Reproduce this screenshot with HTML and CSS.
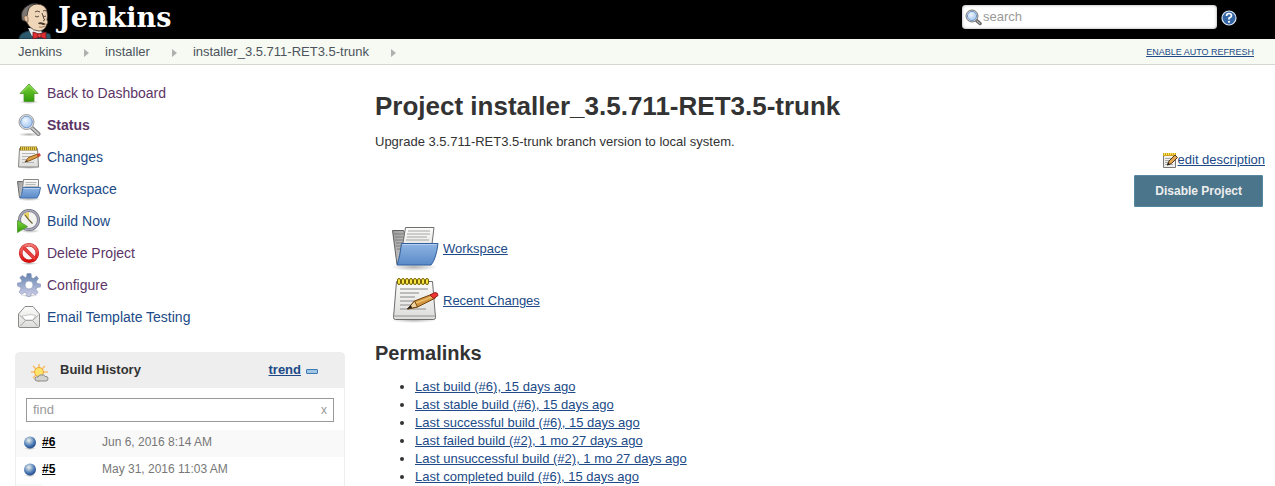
FILE: index.html
```html
<!DOCTYPE html>
<html lang="en">
<head>
<meta charset="utf-8">
<title>installer_3.5.711-RET3.5-trunk [Jenkins]</title>
<link rel="stylesheet" href="styles.css">
</head>
<body>
<svg class="defs" aria-hidden="true">
  <defs>
    <linearGradient id="green" x1="0" y1="0" x2="0" y2="1"><stop offset="0" stop-color="#7ed63c"/><stop offset="1" stop-color="#2f9a08"/></linearGradient>
    <linearGradient id="blue" x1="0" y1="0" x2="0" y2="1"><stop offset="0" stop-color="#8fb5e2"/><stop offset="1" stop-color="#5a8ac8"/></linearGradient>
    <linearGradient id="paper" x1="0" y1="0" x2="0" y2="1"><stop offset="0" stop-color="#fbfbfa"/><stop offset="1" stop-color="#dcdcda"/></linearGradient>
    <linearGradient id="grey" x1="0" y1="0" x2="1" y2="1"><stop offset="0" stop-color="#9c9c9c"/><stop offset="1" stop-color="#d4d4d4"/></linearGradient>
    <linearGradient id="gear" x1="0" y1="0" x2="0" y2="1"><stop offset="0" stop-color="#6482ae"/><stop offset="1" stop-color="#cfcfe8"/></linearGradient>
    <linearGradient id="red" x1="0" y1="0" x2="0" y2="1"><stop offset="0" stop-color="#f27a76"/><stop offset="1" stop-color="#d80c0c"/></linearGradient>
    <radialGradient id="lens" cx=".4" cy=".35" r=".7"><stop offset="0" stop-color="#f0f7ff"/><stop offset="1" stop-color="#9fc3ee"/></radialGradient>
    <radialGradient id="orb" cx=".4" cy=".32" r=".65"><stop offset="0" stop-color="#eef3ee"/><stop offset=".35" stop-color="#9db7d0"/><stop offset=".75" stop-color="#4273b2"/><stop offset="1" stop-color="#2b528e"/></radialGradient>
    <radialGradient id="shade"><stop offset="0" stop-color="#000" stop-opacity=".3"/><stop offset="1" stop-color="#000" stop-opacity="0"/></radialGradient>
    <symbol id="i-folder" viewBox="0 0 48 48">
      <ellipse cx="23" cy="44" rx="23" ry="4" fill="url(#shade)"/>
      <path d="M1.500 7.500h11l1 3h3v31H6z" fill="url(#grey)" stroke="#606060"/>
      <path d="M3 11h10M4 14h9M4 17h9M5 20h8M5 23h7M6 26h5" stroke="#7c7c7c"/>
      <path d="M14.500 4.500H43L41 21H14l-5 11q-2 2 0 2l2-8z" fill="url(#paper)" stroke="#707070"/>
      <path d="M17 8h22M16 11h23M16 14h20M15 17h23" stroke="#a4a4a4"/>
      <path d="M10.500 20.500h36.500q-2 16-7 21.500H6q3-8 4.500-21.500z" fill="url(#blue)" stroke="#315f9d"/>
      <path d="M11.500 21.500h34" stroke="#b6d0ef"/>
    </symbol>
    <symbol id="i-folder-small" viewBox="0 0 24 24">
      <ellipse cx="12" cy="22" rx="12" ry="2" fill="url(#shade)"/>
      <path d="M.5 4.500h5l1 1.500H8v14.500H2.500z" fill="url(#grey)" stroke="#6a6a6a"/>
      <path d="M6.500 2.500h15V10h-14L5 16z" fill="url(#paper)" stroke="#858585"/>
      <path d="M8.500 5.500h11M8.500 7.500h10" stroke="#b8b8b8"/>
      <path d="M6 10.500h17.500q-1 8-3.500 10.500H3q1.500-1.500 3-10.500z" fill="url(#blue)" stroke="#4472b0"/>
      <path d="M6.500 11.500h16" stroke="#b3ceee"/>
    </symbol>
    <symbol id="i-note" viewBox="0 0 48 48">
      <ellipse cx="23" cy="45" rx="23" ry="3" fill="url(#shade)"/>
      <path d="M5.500 6.500h36l3 36q0 2-2 2h-38q-2 0-2-2z" fill="url(#paper)" stroke="#6d6d6d"/>
      <path d="M3 41h41" stroke="#b9b9b7" stroke-width="2"/>
      <path d="M9 14h28M9 18h19M9 22h15M9 26h25M9 30h12M9 34h26" stroke="#aaa" stroke-width="1.500"/>
      <g fill="#f5e344" stroke="#796300"><rect x="6.500" y="3.500" width="3" height="6" rx="1.500"/><rect x="10.500" y="3.500" width="3" height="6" rx="1.500"/><rect x="14.500" y="3.500" width="3" height="6" rx="1.500"/><rect x="18.500" y="3.500" width="3" height="6" rx="1.500"/><rect x="22.500" y="3.500" width="3" height="6" rx="1.500"/><rect x="26.500" y="3.500" width="3" height="6" rx="1.500"/><rect x="30.500" y="3.500" width="3" height="6" rx="1.500"/><rect x="34.500" y="3.500" width="3" height="6" rx="1.500"/></g>
      <path d="M16.500 34l7-8 18-7 3 4-18 9z" fill="#d0943e" stroke="#73450e"/>
      <path d="M25 28l16-6" stroke="#ecc06e" stroke-width="1.500"/>
      <path d="M16.500 34l7-8 3 6z" fill="#efd3a2" stroke="#73450e"/><path d="M16 34l4-4 1 3z" fill="#222"/>
      <path d="M39 20l5-2.500q3 0 3 3l-4.500 3z" fill="#e33" stroke="#9c2020"/>
    </symbol>
    <symbol id="i-note-small" viewBox="0 0 24 24">
      <ellipse cx="12" cy="22.500" rx="12" ry="1.500" fill="url(#shade)"/>
      <path d="M2.500 3.500h18l1 18.500h-20z" fill="url(#paper)" stroke="#858585"/>
      <path d="M5 8.500h13M5 11.500h9M5 14.500h6M5 17.500h12" stroke="#b5b5b5"/>
      <path d="M3 3.500h17" stroke="#8b7420" stroke-width="4"/><path d="M4 3.500h16" stroke="#e8cc4a" stroke-width="3" stroke-dasharray="1.200 .8"/>
      <path d="M8 17l3.500-4.500 9-3.500 1.500 2.500-9 4z" fill="#dda045" stroke="#8c5918"/>
      <path d="M8 17l2-2 .8 1.400z" fill="#333"/><path d="M20 9.500l2.500-1 1 2-2.500 1.200z" fill="#e24a35" stroke="#b23a28" stroke-width=".6"/>
    </symbol>
    <symbol id="i-search" viewBox="0 0 24 24">
      <ellipse cx="12" cy="21.500" rx="11" ry="2" fill="url(#shade)"/>
      <path d="M14.500 14.500l7 6.500" stroke="#777" stroke-width="4" stroke-linecap="round"/>
      <path d="M15 15l6.500 6" stroke="#c7c7c7" stroke-width="2" stroke-linecap="round"/>
      <circle cx="9.500" cy="9" r="7.500" fill="#e9e9e9" stroke="#999"/>
      <circle cx="9.500" cy="9" r="5.800" fill="url(#lens)" stroke="#6d95c8"/>
    </symbol>
  </defs>
</svg>

<header class="header">
  <a class="logo" href="#">
    <svg class="butler" viewBox="0 0 34 37" aria-hidden="true">
      <path d="M1 37q0-5 6-7l6-2 13 2 6 2 1 5z" fill="#2d596c" stroke="#152c38"/>
      <path d="M10 26l4 8 10-2-1-5z" fill="#eee"/>
      <path d="M7 12Q8 2 18 2q10 0 11 8 1 4 0 8 2 2 0 4-2 7-8 7-6 0-10-5l-3-5q-3-2-1-7z" fill="#efd6b9" stroke="#46372c" stroke-width=".8"/>
      <path d="M4 18Q2 8 9 4q4-3 10-2.500-8 2-9 7.500L9 14q-2 0-2 5-2 0-3-1z" fill="#7d7774" stroke="#302d2c" stroke-width=".8"/>
      <path d="M6 15q3-3 4 1v4q-4 0-4-5z" fill="#e6c5a6" stroke="#77583f" stroke-width=".7"/>
      <path d="M17 10q2-2 5 0M25 9q2-1 3 0M17 14q2 2 4 0M25 14q2 1 3 0M24 11l2 6q2 1-1 2" fill="none" stroke="#4a382c" stroke-width=".9"/>
      <path d="M20 21q3-2 8 1-3 2-5 0-2 1-3-1z" fill="#4a382c"/><path d="M21 25q3 1 6-1" fill="none" stroke="#8b5d49" stroke-width=".8"/>
      <path d="M15 30l6 2 7-2v7l-6-2-7 2z" fill="#df2f33" stroke="#75151a" stroke-width=".8"/><circle cx="21.500" cy="33.500" r="1.800" fill="#f04d48" stroke="#75151a" stroke-width=".8"/>
    </svg>
    <span>Jenkins</span>
  </a>
  <form class="search" role="search">
    <label class="search-box">
      <svg width="17" height="17" viewBox="0 0 17 17" aria-hidden="true"><path d="M11 11l4 3.500" stroke="#666" stroke-width="3.500" stroke-linecap="round"/><path d="M12 12l3 2.500" stroke="#ccc" stroke-linecap="round"/><circle cx="7" cy="7" r="6" fill="#ddd" stroke="#777"/><circle cx="7" cy="7" r="4.600" fill="url(#lens)" stroke="#6d95c8"/></svg>
      <input type="text" placeholder="search" aria-label="Search">
    </label>
    <a class="help" href="#" aria-label="Help">
      <svg width="16" height="16" viewBox="0 0 16 16" aria-hidden="true"><circle cx="8" cy="8" r="7" fill="#3465a4" stroke="#dce6f2" stroke-width="1.200"/><path d="M5.500 6q0-2.500 2.500-2.500t2.500 2.200Q10.500 7 8 8.300v1.200" fill="none" stroke="#fff" stroke-width="1.700"/><circle cx="8" cy="11.800" r="1.100" fill="#fff"/></svg>
    </a>
  </form>
</header>

<nav class="breadcrumbs" aria-label="Breadcrumb">
  <ol>
    <li><a href="#">Jenkins</a></li>
    <li><a href="#">installer</a></li>
    <li><a href="#">installer_3.5.711-RET3.5-trunk</a></li>
  </ol>
  <a class="refresh" href="#">ENABLE AUTO REFRESH</a>
</nav>

<div class="page">
  <aside class="side">
    <nav class="tasks" aria-label="Project">
      <a class="visited" href="#"><svg viewBox="0 0 24 24" aria-hidden="true"><ellipse cx="12" cy="21" rx="10" ry="2" fill="url(#shade)"/><path d="M12 3l9 9.500h-4V20.500H7v-8H3z" fill="url(#green)" stroke="#4c962a" stroke-width=".8"/><path d="M5 11.800L12 4.300l7 7.500" fill="none" stroke="#a6e870" stroke-width=".8"/></svg>Back to Dashboard</a>
      <a class="visited current" href="#"><svg aria-hidden="true"><use href="#i-search"/></svg>Status</a>
      <a href="#"><svg aria-hidden="true"><use href="#i-note-small"/></svg>Changes</a>
      <a href="#"><svg aria-hidden="true"><use href="#i-folder-small"/></svg>Workspace</a>
      <a href="#"><svg viewBox="0 0 24 24" aria-hidden="true"><ellipse cx="13" cy="22" rx="10" ry="2" fill="url(#shade)"/><circle cx="12" cy="11" r="9.500" fill="#f3f3ef" stroke="#73747f" stroke-width="3"/><circle cx="12" cy="11" r="9.500" fill="none" stroke="#a9aac0" stroke-width="1.600"/><path d="M12 11L6.500 5.500q2-2.500 5.500-2.500z" fill="#e8cf66"/><path d="M8 6l4 5 3.500 3.500" fill="none" stroke="#6b6136" stroke-width="1.200"/><path d="M.5 11.500L10.500 17.500.5 23.500z" fill="url(#green)" stroke="#4c962a" stroke-width=".8"/></svg>Build Now</a>
      <a class="visited" href="#"><svg viewBox="0 0 24 24" aria-hidden="true"><ellipse cx="12" cy="22.500" rx="9" ry="1.500" fill="url(#shade)"/><circle cx="12" cy="12" r="8.300" fill="#fcf5f5" stroke="#c22b2b" stroke-width="3.600"/><path d="M6 6l12 12" stroke="#c22b2b" stroke-width="3.600"/><circle cx="12" cy="12" r="8.300" fill="none" stroke="url(#red)" stroke-width="2.600"/><path d="M6 6l12 12" stroke="#e8403e" stroke-width="2.600"/></svg>Delete Project</a>
      <a class="visited" href="#"><svg viewBox="0 0 24 24" aria-hidden="true"><ellipse cx="12" cy="22.500" rx="9" ry="1.500" fill="url(#shade)"/><path fill-rule="evenodd" d="M10 .5h4l.5 4 2 1L19.500 3l2 2.500-2.200 3 1 2 3.200.5v3l-3.500.5-1 2 2 3-2.500 2.500-3-2-1.500.8-.7 2.700h-3l-.8-3.200-2-.8-3 2L2 19l2-3-.8-2L.5 13V10L4 9.500l.8-2-2-3L5.500 2.500l2.700 2L9.500 4zM12 8a4 4 0 100 8 4 4 0 000-8z" fill="url(#gear)" stroke="#8795b8" stroke-width=".6"/></svg>Configure</a>
      <a href="#"><svg viewBox="0 0 24 24" aria-hidden="true"><path d="M1.500 9L8 1.500h8L22.500 9v12q0 1.500-1.500 1.500H3q-1.500 0-1.500-1.500z" fill="url(#paper)" stroke="#8a8a8a"/><path d="M5 11l9-1.500 4.500 1L16 15H8z" fill="#fff" stroke="#bbb" stroke-width=".8"/><path d="M2.500 10l6 5.500-5 5.500M21.500 10l-6 5.500 5 5.500M8.500 15.500h7" fill="none" stroke="#a5a5a5"/></svg>Email Template Testing</a>
    </nav>

    <section class="history">
      <header class="history-head">
        <svg width="18" height="18" viewBox="0 0 18 18" aria-hidden="true"><path d="M8 0v18M0 8h17M2 2l12 12M14 2L2 14" stroke="#f6bd69" stroke-width="1.500"/><circle cx="8" cy="8" r="4.500" fill="#ffe36a" stroke="#f0a43a"/><path d="M6 17q-3-.5-2-3 1-1.500 3-1 1-3 4-2 2-1 3 1.500 3-.5 3 2 0 2.500-2 2.500z" fill="#d2d2cf" stroke="#8c8c88"/></svg>
        <h2>Build History</h2>
        <a class="trend" href="#">trend</a>
        <button class="collapse" type="button" aria-label="Collapse"></button>
      </header>
      <div class="find">
        <input type="text" placeholder="find" aria-label="Find builds">
        <button type="button" aria-label="Clear">x</button>
      </div>
      <table class="builds">
        <tbody>
          <tr><td class="ball"><svg width="14" height="14" viewBox="0 0 14 14" aria-hidden="true"><ellipse cx="7" cy="12.500" rx="6" ry="1.500" fill="url(#shade)"/><circle cx="7" cy="6.500" r="6" fill="url(#orb)"/></svg></td><td class="number"><a href="#">#6</a></td><td>Jun 6, 2016 8:14 AM</td></tr>
          <tr><td class="ball"><svg width="14" height="14" viewBox="0 0 14 14" aria-hidden="true"><ellipse cx="7" cy="12.500" rx="6" ry="1.500" fill="url(#shade)"/><circle cx="7" cy="6.500" r="6" fill="url(#orb)"/></svg></td><td class="number"><a href="#">#5</a></td><td>May 31, 2016 11:03 AM</td></tr>
        </tbody>
      </table>
    </section>
  </aside>

  <main class="main">
    <h1>Project installer_3.5.711-RET3.5-trunk</h1>
    <p class="description">Upgrade 3.5.711-RET3.5-trunk branch version to local system.</p>
    <div class="actions">
      <a class="edit" href="#"><svg width="16" height="16" viewBox="0 0 16 16" aria-hidden="true"><path d="M1.500 2.500h12v13h-12z" fill="#eeeeec" stroke="#777"/><path d="M3 6.500h8M3 8.500h6M3 10.500h4M3 12.500h8" stroke="#aaa"/><path d="M1 2.500h13" stroke="#d3a51c" stroke-width="3"/><path d="M2 2h12" stroke="#fbe25b" stroke-width="2" stroke-dasharray="1 1"/><path d="M5.500 13l1.500-4 6-6 2.500 2.500-6 6z" fill="#dfa554" stroke="#513b1c"/><path d="M5 13.500l1-3 2 2z" fill="#222"/></svg>edit description</a>
      <button class="disable" type="button">Disable Project</button>
    </div>
    <div class="shortcuts">
      <div><svg width="48" height="48" aria-hidden="true"><use href="#i-folder"/></svg><a href="#">Workspace</a></div>
      <div><svg width="48" height="48" aria-hidden="true"><use href="#i-note"/></svg><a href="#">Recent Changes</a></div>
    </div>
    <h2>Permalinks</h2>
    <ul class="permalinks">
      <li><a href="#">Last build (#6), 15 days ago</a></li>
      <li><a href="#">Last stable build (#6), 15 days ago</a></li>
      <li><a href="#">Last successful build (#6), 15 days ago</a></li>
      <li><a href="#">Last failed build (#2), 1 mo 27 days ago</a></li>
      <li><a href="#">Last unsuccessful build (#2), 1 mo 27 days ago</a></li>
      <li><a href="#">Last completed build (#6), 15 days ago</a></li>
    </ul>
  </main>
</div>
</body>
</html>
```
FILE: styles.css
```css
* { box-sizing: border-box; }
body { margin: 0; background: #fff; color: #333; font: 13px/18px "Liberation Sans", Arial, sans-serif; }
a { color: #204a87; }
h1, h2, p, ol, ul { margin: 0; padding: 0; }
button, input { font: inherit; }
svg { flex: none; }
.defs { position: absolute; width: 0; height: 0; }

.header { display: flex; justify-content: space-between; height: 39px; padding: 0 38px 0 18px; background: #000; }
.logo { display: flex; align-items: flex-end; gap: 6px; color: #fff; text-decoration: none; font: bold 27px/36px "DejaVu Serif", Georgia, serif; }
.logo span { align-self: flex-start; }
.butler { width: 34px; height: 37px; }
.search { display: flex; align-items: flex-start; gap: 4px; padding-top: 5px; }
.search-box { display: flex; align-items: center; gap: 1px; width: 255px; height: 24px; padding-left: 3px; border-radius: 4px; background: #fff; box-shadow: inset 0 0 3px #999; }
.search-box input { flex: 1; min-width: 0; padding: 0; border: 0; outline: 0; background: none; }
input::placeholder { color: #999; opacity: 1; }
.help { display: flex; padding-top: 5px; }

.breadcrumbs { display: flex; align-items: center; justify-content: space-between; height: 26px; padding: 0 21px 0 18px; border-bottom: 1px solid #d3d7cf; background: #f6faf2; }
.breadcrumbs ol { display: flex; list-style: none; }
.breadcrumbs li { display: flex; align-items: center; }
.breadcrumbs li::after { content: ""; margin: 2px 16px 0 22px; border-left: 5px solid #b0b0b0; border-top: 4px solid transparent; border-bottom: 4px solid transparent; }
.breadcrumbs li a { color: #4d545d; text-decoration: none; }
.breadcrumbs .refresh { font-size: 9px; }

.page { display: flex; }
.side { flex: none; width: 345px; padding: 12px 0 0 15px; }
.tasks { display: flex; flex-direction: column; padding-left: 2px; font-size: 14px; }
.tasks a { display: flex; align-items: center; gap: 6px; height: 32px; text-decoration: none; }
.tasks .visited { color: #5c3566; }
.tasks .current { font-weight: bold; }
.tasks svg { width: 24px; height: 24px; }

.history { margin-top: 19px; border: 1px solid #eee; border-bottom: 0; border-radius: 5px 5px 0 0; }
.history-head { display: flex; align-items: center; height: 35px; padding: 0 26px 2px 15px; background: #eee; }
.history-head svg { margin-top: 6px; }
.history-head h2 { flex: 1; margin-left: 11px; font-size: 13px; line-height: 18px; }
.trend { font-weight: bold; }
.collapse { width: 12px; height: 5px; margin: 4px 0 0 5px; padding: 0; border: 1px solid #3c78b4; border-radius: 1px; background: #a3c5e6; }
.find { display: flex; height: 24px; margin: 10px 10px 8px; border: 1px solid #999; }
.find input { flex: 1; min-width: 0; padding: 0 6px; border: 0; outline: 0; }
.find button { padding: 0 6px; border: 0; background: none; color: #999; font-size: 12px; }
.builds { width: 100%; border-collapse: collapse; color: #777; font-size: 12px; }
.builds td { height: 27px; padding: 0 0 3px; }
.builds tr:nth-child(odd) { background: #f9f9f9; }
.builds .ball { width: 26px; padding: 0 0 2px 7px; }
.builds svg { display: block; }
.builds .number { width: 60px; }
.builds .number a { color: #000; font-weight: bold; }
.builds tbody::after { content: ""; display: table-row; height: 2px; background: #f9f9f9; }

.main { flex: 1; min-width: 0; padding: 24px 10px 0 30px; }
h1 { font-size: 26px; line-height: 34px; }
.description { margin-top: 10px; }
.actions { display: flex; flex-direction: column; align-items: flex-end; gap: 6px; }
.edit { display: flex; align-items: center; }
.disable { height: 32px; margin-right: 2px; padding: 0 20px; border: 1px solid #5788a1; border-radius: 1px; background: #4b758b; color: #eee; font-size: 12px; font-weight: bold; }
.shortcuts { display: flex; flex-direction: column; gap: 4px; padding: 16px 0 0 16px; }
.shortcuts div { display: flex; align-items: center; gap: 4px; }
.shortcuts a { padding-top: 4px; }
.main h2 { margin-top: 18px; font-size: 20px; line-height: 24px; }
.permalinks { margin-top: 13px; padding-left: 40px; }
```
